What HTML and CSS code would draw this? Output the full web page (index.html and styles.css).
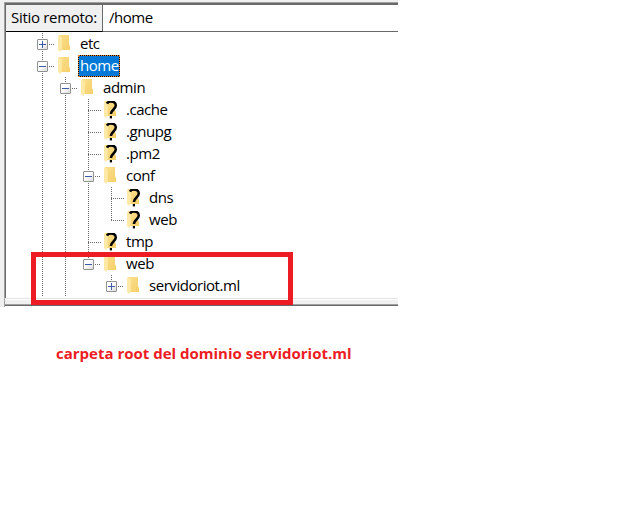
FILE: index.html
```
<!DOCTYPE html>
<html lang="es">
<head>
<meta charset="utf-8">
<title>Sitio remoto</title>
<link rel="stylesheet" href="styles.css">
</head>
<body>
<svg class="defs" width="0" height="0">
  <defs>
    <linearGradient id="gold" x1="0" y1="0" x2="1" y2="1"><stop offset="0" stop-color="#fbe08d"/><stop offset="1" stop-color="#f5cf6b"/></linearGradient>
    <symbol id="folder" viewBox="0 0 14 18">
      <path d="M1 0H11v9.8l1 .8V15H2Z" fill="url(#gold)"/>
      <path d="M0 .4 3.8 2v12.2l-.8.6V17L0 15.2Z" fill="#ffe9a6"/>
    </symbol>
    <symbol id="unknown" viewBox="0 0 14 18">
      <use href="#folder" width="14" height="18"/>
      <path d="M3 2.6C3.7 1.2 5 .6 7 .6c3 0 4.8 1.5 4.8 4 0 3.7-4.9 4.1-4.9 8.4" fill="none" stroke="#000" stroke-width="2.5"/>
      <path d="M5.8 15h2.2v2.4H5.8Z" fill="#000"/>
    </symbol>
  </defs>
</svg>
<main class="window">
  <section class="pane">
    <header class="bar"><div class="label"><span>Sitio remoto:</span></div><div class="path"><span>/home</span></div></header>
    <div class="tree">
      <div class="row"><i class="cell v"><b class="box plus"></b></i><svg class="icon"><use href="#folder"/></svg><span>etc</span></div>
      <div class="row"><i class="cell v"><b class="box"></b></i><svg class="icon"><use href="#folder"/></svg><span class="selected">home</span></div>
      <div class="row"><i class="cell v"></i><i class="cell v"><b class="box"></b></i><svg class="icon"><use href="#folder"/></svg><span>admin</span></div>
      <div class="row"><i class="cell v"></i><i class="cell v"></i><i class="cell v leaf"></i><svg class="icon"><use href="#unknown"/></svg><span>.cache</span></div>
      <div class="row"><i class="cell v"></i><i class="cell v"></i><i class="cell v leaf"></i><svg class="icon"><use href="#unknown"/></svg><span>.gnupg</span></div>
      <div class="row"><i class="cell v"></i><i class="cell v"></i><i class="cell v leaf"></i><svg class="icon"><use href="#unknown"/></svg><span>.pm2</span></div>
      <div class="row"><i class="cell v"></i><i class="cell v"></i><i class="cell v"><b class="box"></b></i><svg class="icon"><use href="#folder"/></svg><span>conf</span></div>
      <div class="row"><i class="cell v"></i><i class="cell v"></i><i class="cell v"></i><i class="cell v leaf"></i><svg class="icon"><use href="#unknown"/></svg><span>dns</span></div>
      <div class="row"><i class="cell v"></i><i class="cell v"></i><i class="cell v"></i><i class="cell v last leaf"></i><svg class="icon"><use href="#unknown"/></svg><span>web</span></div>
      <div class="row"><i class="cell v"></i><i class="cell v"></i><i class="cell v leaf"></i><svg class="icon"><use href="#unknown"/></svg><span>tmp</span></div>
      <div class="row"><i class="cell v"></i><i class="cell v"></i><i class="cell v last"><b class="box"></b></i><svg class="icon"><use href="#folder"/></svg><span>web</span></div>
      <div class="row"><i class="cell v"></i><i class="cell v"></i><i class="cell"></i><i class="cell v last"><b class="box plus"></b></i><svg class="icon"><use href="#folder"/></svg><span class="domain">servidoriot.ml</span></div>
    </div>
  </section>
  <div class="splitter"></div>
  <div class="highlight"></div>
</main>
<p class="caption">carpeta root del dominio servidoriot.ml</p>
</body>
</html>
```
FILE: styles.css
```
* { box-sizing: border-box; }
body { margin: 0; background: #fff; color: #000; font: 15px/22px "Open Sans", "Noto Sans", sans-serif; overflow: hidden; }
.defs { display: block; position: absolute; }
.window { position: relative; width: 398px; height: 307px; padding: 2px 0 0 4px; background: #f0f0f0; }
.pane { height: 297px; border-top: 1px solid #a0a0a0; border-left: 1px solid #a0a0a0; border-bottom: 1px solid #e3e3e3; background: #fff; box-shadow: inset 1px 0 #696969; padding-left: 1px; }
.bar { display: flex; height: 29px; border-top: 2px solid #696969; }
.label { width: 97px; padding: 1px 0 0 5px; background: #f0f0f0; border-right: 1px solid #696969; border-bottom: 1px solid #000; white-space: nowrap; letter-spacing: -.3px; }
.path { flex: 1; padding: 1px 0 0 6px; border-bottom: 1px solid #696969; letter-spacing: -.45px; }
.tree { padding: 1px 0 0 25px; }
.row { display: flex; height: 22px; white-space: nowrap; }
.row span { margin-left: 1px; padding: 0 2px; letter-spacing: -.45px; line-height: 21px; }
.row .domain { letter-spacing: -.45px; }
.cell { position: relative; flex: 0 0 23px; height: 22px; }
.v::before { content: ""; position: absolute; left: 11px; top: 0; width: 1px; height: 22px; background: repeating-linear-gradient(#696969 0 1px, transparent 1px 2px); }
.last::before { height: 11px; }
.cell.leaf::after, .cell:has(.box)::after { content: ""; position: absolute; left: 18px; top: 11px; width: 6px; height: 1px; background: repeating-linear-gradient(90deg, #696969 0 1px, transparent 1px 2px); }
.cell.leaf::after { left: 11px; width: 14px; }
.box { position: absolute; left: 6px; top: 6px; width: 11px; height: 11px; border: 1px solid #919191; border-radius: 1px; background: linear-gradient(#3c5aa8, #3c5aa8) center / 7px 1px no-repeat, linear-gradient(135deg, #fff 40%, #dcdcdc); }
.plus { background: linear-gradient(#3c5aa8, #3c5aa8) center / 7px 1px no-repeat, linear-gradient(#3c5aa8, #3c5aa8) center / 1px 7px no-repeat, linear-gradient(135deg, #fff 40%, #dcdcdc); }
.icon { flex: 0 0 14px; width: 14px; height: 18px; margin: 2px 5px 0 4px; overflow: visible; }
.row .selected { width: 42px; height: 22px; background: #0078d7; color: #fff; outline: 1px dotted #ff8728; outline-offset: -1px; box-shadow: inset 0 0 0 1px #000; }
.splitter { height: 8px; border-left: 1px solid #a0a0a0; background: linear-gradient(#fff 1px, #f0f0f0 1px 5px, #a0a0a0 5px 6px, #696969 6px 7px, #fff 7px); }
.highlight { position: absolute; left: 31px; top: 252px; width: 262px; height: 53px; border: 5px solid #ed1c24; }
.caption { margin: 35px 0 0 56px; color: #ed1c24; font: bold 15px/23px "Open Sans", sans-serif; white-space: nowrap; }
```
